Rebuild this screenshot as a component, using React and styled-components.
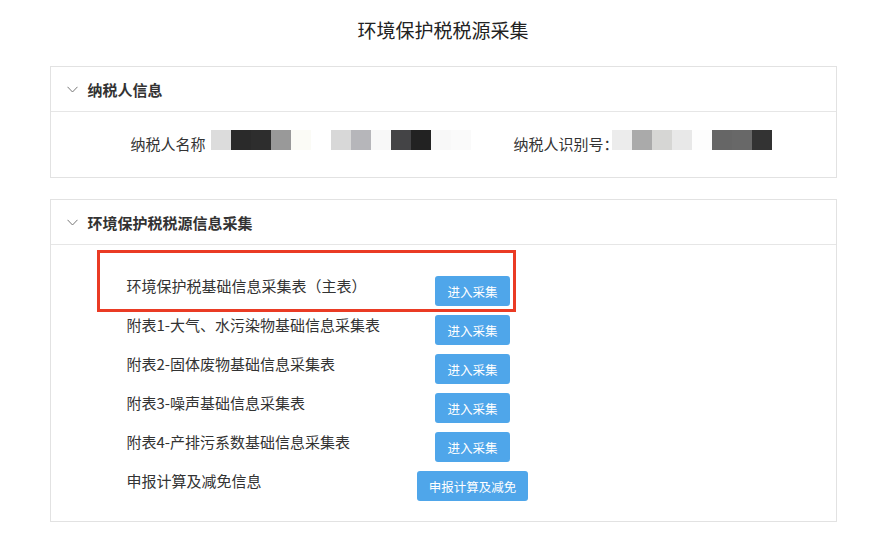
import React from "react";
import styled, { createGlobalStyle } from "styled-components";

const GlobalStyle = createGlobalStyle`
  body {
    margin: 0;
    background: #fff;
    font-family: "Noto Sans CJK SC", "Noto Sans", sans-serif;
    color: #333;
  }
`;

const Page = styled.div`
  width: 787px;
  margin: 0 auto;
  padding-bottom: 27px;
`;

const Title = styled.h1`
  margin: 0;
  padding: 19px 0 25px;
  font-size: 19px;
  line-height: 22px;
  font-weight: normal;
  text-align: center;
  color: #222;
`;

const Panel = styled.section`
  border: 1px solid #e2e2e2;
  & + & {
    margin-top: 21px;
  }
`;

const PanelHeader = styled.div`
  height: 44px;
  display: flex;
  align-items: center;
  gap: 10px;
  padding-left: 16px;
  border-bottom: 1px solid #e6e6e6;
  font-size: 15px;
  font-weight: bold;
  color: #333;
`;

const Chevron = () => (
  <svg width="11" height="7" viewBox="0 0 11 7">
    <polyline points="0.5,0.8 5.5,6 10.5,0.8" fill="none" stroke="#777" strokeWidth="1" />
  </svg>
);

const InfoBody = styled.div`
  height: 65px;
  display: flex;
  align-items: flex-start;
  padding: 18px 0 0 80px;
  box-sizing: border-box;
`;

const Field = styled.div`
  display: flex;
  align-items: flex-start;
  margin-right: ${(p) => p.$gap || 0}px;
`;

const Label = styled.span`
  font-size: 15px;
  line-height: 20px;
  margin-top: 4px;
  margin-right: ${(p) => p.$tight ? -7 : 5}px;
  color: #333;
  white-space: nowrap;
`;

const Mosaic = styled.div`
  display: flex;
`;

const Cell = styled.span`
  width: 20px;
  height: 20px;
  background: ${(p) => p.$c};
`;

const ListBody = styled.div`
  position: relative;
  padding: 31px 0 20px 76px;
  display: grid;
  grid-template-columns: 290px 112px;
  row-gap: 9px;
`;

const RowText = styled.div`
  font-size: 15px;
  line-height: 20px;
  align-self: center;
  margin-bottom: 10px;
  color: #333;
  white-space: nowrap;
`;

const Button = styled.button`
  justify-self: center;
  height: 30px;
  padding: 0 ${(p) => p.$wide ? 12 : 12}px;
  border: none;
  border-radius: 3px;
  background: #4fa6ea;
  color: #fff;
  font-family: inherit;
  font-size: 12.5px;
  cursor: pointer;
`;

const Highlight = styled.div`
  position: absolute;
  left: 46px;
  top: 5px;
  width: 419px;
  height: 62px;
  border: 3px solid #ea3b24;
  box-sizing: border-box;
  pointer-events: none;
`;

const nameCells = ["#dcdcdc", "#2a2a2a", "#2d2d2d", "#999", "#fbfbf6", "#fff", "#d8d8d8", "#b6b6ba", "#f8f8f8", "#444446", "#222", "#f8f8f8", "#fafafa"];
const idCells = ["#ececec", "#aaa", "#d6d6d4", "#e8e8e8", "#fdfdfd", "#666", "#686868", "#333"];

const rows = [
  { text: "环境保护税基础信息采集表（主表）", btn: "进入采集" },
  { text: "附表1-大气、水污染物基础信息采集表", btn: "进入采集" },
  { text: "附表2-固体废物基础信息采集表", btn: "进入采集" },
  { text: "附表3-噪声基础信息采集表", btn: "进入采集" },
  { text: "附表4-产排污系数基础信息采集表", btn: "进入采集" },
  { text: "申报计算及减免信息", btn: "申报计算及减免" },
];

export default function App() {
  return (
    <>
      <GlobalStyle />
      <Page>
        <Title>环境保护税税源采集</Title>
        <Panel>
          <PanelHeader>
            <Chevron />
            纳税人信息
          </PanelHeader>
          <InfoBody>
            <Field $gap={43}>
              <Label>纳税人名称</Label>
              <Mosaic>
                {nameCells.map((c, i) => (
                  <Cell key={i} $c={c} />
                ))}
              </Mosaic>
            </Field>
            <Field>
              <Label $tight>纳税人识别号：</Label>
              <Mosaic>
                {idCells.map((c, i) => (
                  <Cell key={i} $c={c} />
                ))}
              </Mosaic>
            </Field>
          </InfoBody>
        </Panel>
        <Panel>
          <PanelHeader>
            <Chevron />
            环境保护税税源信息采集
          </PanelHeader>
          <ListBody>
            {rows.map((r) => (
              <React.Fragment key={r.text}>
                <RowText>{r.text}</RowText>
                <Button>{r.btn}</Button>
              </React.Fragment>
            ))}
            <Highlight />
          </ListBody>
        </Panel>
      </Page>
    </>
  );
}
